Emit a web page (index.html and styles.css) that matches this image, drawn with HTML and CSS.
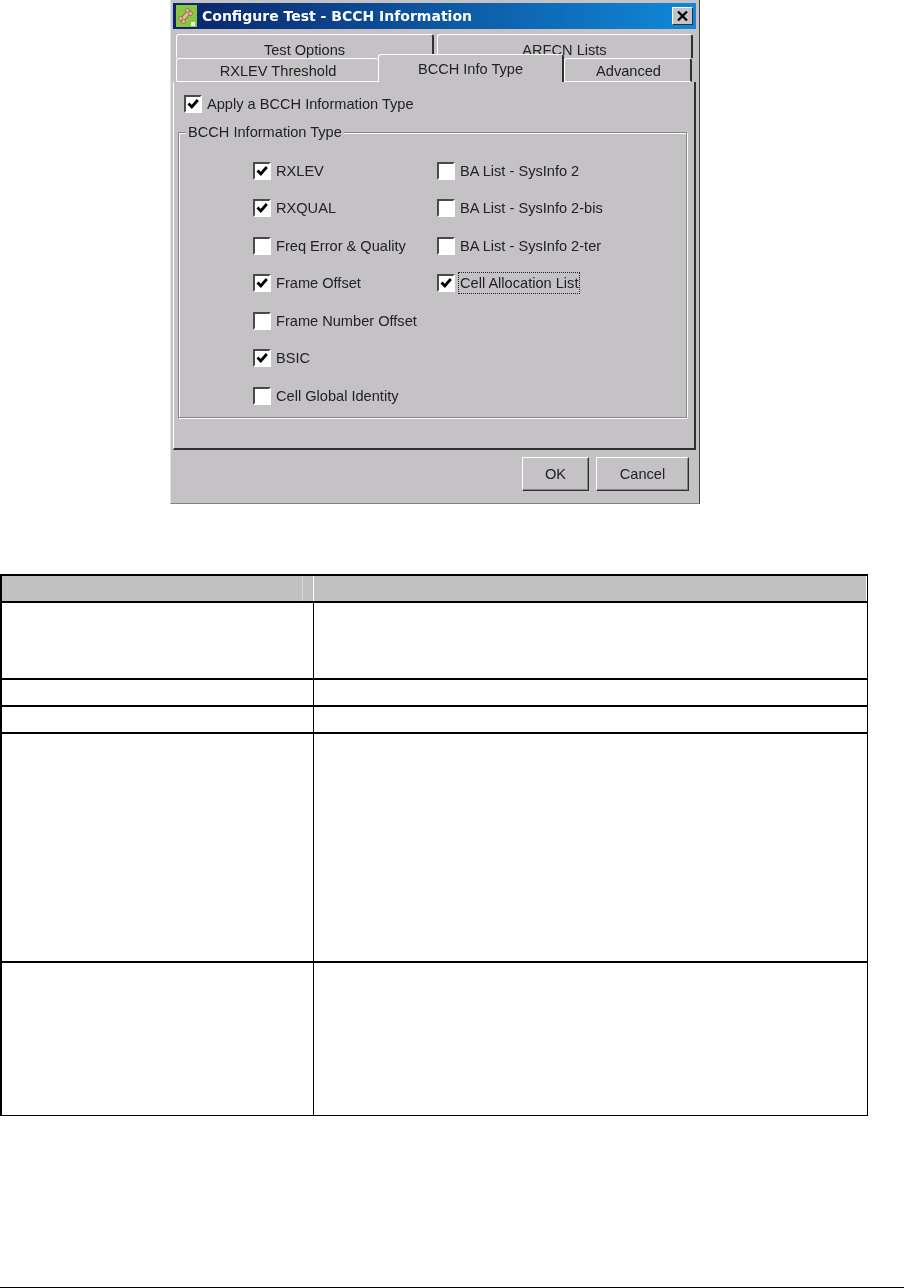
FILE: index.html
```html
<!DOCTYPE html>
<html lang="en">
<head>
    <meta charset="UTF-8">
    <meta name="viewport" content="width=device-width, initial-scale=1.0">
    <title>Configure Test - BCCH Information</title>
    <link rel="stylesheet" href="styles.css">
</head>
<body>

<div class="dialog">
    <div class="titlebar">
        <svg class="app-icon" width="21" height="22" viewBox="0 0 21 22">
            <rect width="21" height="22" fill="#8cc63f"/>
            <rect x="15" y="17" width="4" height="4" fill="#eef5d8"/>
            <path d="M6 15 L13 7" stroke="#8f7a5c" stroke-width="5" stroke-linecap="round"/>
            <path d="M6 15 L13 7" stroke="#e2bd92" stroke-width="3" stroke-linecap="round"/>
            <circle cx="4.500" cy="13.500" r="2" fill="#e2bd92" stroke="#8f7a5c"/>
            <circle cx="7.500" cy="16.500" r="2" fill="#e2bd92" stroke="#8f7a5c"/>
            <circle cx="11.500" cy="5.500" r="2" fill="#e2bd92" stroke="#8f7a5c"/>
            <circle cx="14.500" cy="8.500" r="2" fill="#e2bd92" stroke="#8f7a5c"/>
        </svg>
        <span class="title-text">Configure Test - BCCH Information</span>
        <div class="close-btn">
            <svg width="11" height="10" viewBox="0 0 11 10"><path d="M1 0.500 L10 9.500 M10 0.500 L1 9.500" stroke="#000" stroke-width="2.200"/></svg>
        </div>
    </div>

    <div class="tabs">
        <div class="tab-row tab-row-back">
            <div class="tab tab-options">Test Options</div>
            <div class="tab tab-arfcn">ARFCN Lists</div>
        </div>
        <div class="tab-row tab-row-front">
            <div class="tab tab-rxlev">RXLEV Threshold</div>
            <div class="tab tab-bcch">BCCH Info Type</div>
            <div class="tab tab-advanced">Advanced</div>
        </div>
    </div>

    <div class="panel">
        <div class="check apply-check">
            <span class="box"><svg viewBox="0 0 12 12"><path d="M1.500 5.500 L4.800 9 L10.800 2" fill="none" stroke="#000" stroke-width="2.800"/></svg></span>
            <span>Apply a BCCH Information Type</span>
        </div>

        <div class="group">
            <span class="group-label">BCCH Information Type</span>
            <div class="check-grid">
                <div class="check"><span class="box"><svg viewBox="0 0 12 12"><path d="M1.500 5.500 L4.800 9 L10.800 2" fill="none" stroke="#000" stroke-width="2.800"/></svg></span><span>RXLEV</span></div>
                <div class="check"><span class="box"></span><span>BA List - SysInfo 2</span></div>
                <div class="check"><span class="box"><svg viewBox="0 0 12 12"><path d="M1.500 5.500 L4.800 9 L10.800 2" fill="none" stroke="#000" stroke-width="2.800"/></svg></span><span>RXQUAL</span></div>
                <div class="check"><span class="box"></span><span>BA List - SysInfo 2-bis</span></div>
                <div class="check"><span class="box"></span><span>Freq Error &amp; Quality</span></div>
                <div class="check"><span class="box"></span><span>BA List - SysInfo 2-ter</span></div>
                <div class="check"><span class="box"><svg viewBox="0 0 12 12"><path d="M1.500 5.500 L4.800 9 L10.800 2" fill="none" stroke="#000" stroke-width="2.800"/></svg></span><span>Frame Offset</span></div>
                <div class="check"><span class="box"><svg viewBox="0 0 12 12"><path d="M1.500 5.500 L4.800 9 L10.800 2" fill="none" stroke="#000" stroke-width="2.800"/></svg></span><span class="focused">Cell Allocation List</span></div>
                <div class="check col-one"><span class="box"></span><span>Frame Number Offset</span></div>
                <div class="check col-one"><span class="box"><svg viewBox="0 0 12 12"><path d="M1.500 5.500 L4.800 9 L10.800 2" fill="none" stroke="#000" stroke-width="2.800"/></svg></span><span>BSIC</span></div>
                <div class="check col-one"><span class="box"></span><span>Cell Global Identity</span></div>
            </div>
        </div>
    </div>

    <div class="buttons">
        <div class="btn btn-ok">OK</div>
        <div class="btn btn-cancel">Cancel</div>
    </div>
</div>

<table class="info-table">
    <tr class="row-head"><th class="col-a"></th><th></th></tr>
    <tr class="row-a"><td></td><td></td></tr>
    <tr class="row-b"><td></td><td></td></tr>
    <tr class="row-b"><td></td><td></td></tr>
    <tr class="row-c"><td></td><td></td></tr>
    <tr class="row-d"><td></td><td></td></tr>
</table>

<div class="page-rule"></div>

</body>
</html>
```

FILE: styles.css
```css
html, body {
    margin: 0;
    padding: 0;
    background: #fff;
}

body {
    height: 1288px;
    overflow: hidden;
    font-family: "Liberation Sans", Arial, sans-serif;
}

/* Dialog */
.dialog {
    box-sizing: border-box;
    width: 530px;
    height: 504px;
    margin-left: 170px;
    padding: 3px 3px 0 2px;
    background: #c4c2c5;
    border-right: 1px solid #404040;
    border-bottom: 1px solid #808080;
    border-left: 1px solid #e4e4e4;
    color: #222;
    font-size: 14.6px;
    filter: blur(0.4px);
}

.titlebar {
    display: flex;
    align-items: center;
    height: 26px;
    padding: 0 3px 0 3px;
    background: linear-gradient(to right, #0a246a, #1088d8);
}

.app-icon {
    flex: none;
}

.title-text {
    margin-left: 5px;
    color: #fff;
    font-family: "DejaVu Sans", sans-serif;
    font-weight: bold;
    font-size: 14px;
}

.close-btn {
    display: flex;
    justify-content: center;
    align-items: center;
    box-sizing: border-box;
    width: 21px;
    height: 18px;
    margin-left: auto;
    background: #c4c2c5;
    border: 1px solid;
    border-color: #fff #303030 #303030 #fff;
}

/* Tabs */
.tabs {
    height: 53px;
    padding-left: 3px;
}

.tab-row {
    display: flex;
}

.tab-row-back {
    box-sizing: border-box;
    gap: 3px;
    padding-top: 5px;
    height: 25px;
}

.tab-row-front {
    position: relative;
    z-index: 1;
    align-items: flex-end;
    height: 28px;
}

.tab {
    box-sizing: border-box;
    flex: none;
    display: flex;
    justify-content: center;
    background: #c4c2c5;
    border-top: 1px solid #fff;
    border-left: 1px solid #fff;
    border-right: 2px solid #303030;
    border-radius: 3px 3px 0 0;
}

.tab-options, .tab-arfcn {
    height: 24px;
    padding-top: 7px;
    line-height: 16px;
}

.tab-options { width: 258px; }
.tab-arfcn { width: 256px; }

.tab-rxlev, .tab-advanced {
    height: 24px;
    padding-top: 4px;
    border-bottom: 1px solid #fff;
    line-height: 16px;
}

.tab-rxlev {
    width: 202px;
    border-right: 0;
    padding-left: 1px;
}

.tab-advanced {
    width: 128px;
    padding-left: 2px;
}

.tab-bcch {
    width: 186px;
    height: 28px;
    padding-top: 6px;
    line-height: 16px;
}

/* Panel */
.panel {
    box-sizing: border-box;
    width: 523px;
    height: 368px;
    padding: 14px 5px 0 4px;
    border-left: 1px solid #fff;
    border-right: 2px solid #303030;
    border-bottom: 2px solid #303030;
}

.check {
    display: flex;
    align-items: center;
    gap: 5px;
    height: 16px;
}

.box {
    box-sizing: border-box;
    flex: none;
    display: flex;
    width: 18px;
    height: 18px;
    padding: 1px;
    background: #fff;
    border: 2px solid;
    border-color: #4a4a4a #fff #fff #4a4a4a;
}

.box svg {
    width: 100%;
    height: 100%;
}

.apply-check {
    margin-left: 6px;
}

.group {
    position: relative;
    box-sizing: border-box;
    width: 509px;
    height: 286px;
    margin-top: 20px;
    padding: 19px 0 0 74px;
    border: 1px solid #858585;
    box-shadow: inset 1px 1px 0 #fff, 1px 1px 0 #fff;
}

.group-label {
    position: absolute;
    top: -9px;
    left: 7px;
    padding: 0 2px;
    background: #c4c2c5;
    line-height: 16px;
}

.check-grid {
    display: grid;
    grid-template-columns: 184px 1fr;
    grid-auto-rows: 37.5px;
    align-items: center;
}

.col-one {
    grid-column: 1;
}

.focused {
    outline: 1px dotted #222;
    padding: 2px 1px;
    margin-left: -1px;
}

/* Buttons */
.buttons {
    display: flex;
    gap: 7px;
    justify-content: flex-end;
    padding: 7px 7px 0 0;
}

.btn {
    box-sizing: border-box;
    display: flex;
    justify-content: center;
    align-items: center;
    height: 34px;
    border: 1px solid;
    border-color: #fff #303030 #303030 #fff;
    box-shadow: inset -1px -1px 0 #858585;
}

.btn-ok { width: 67px; }
.btn-cancel { width: 93px; }

/* Table below the dialog */
.info-table {
    table-layout: fixed;
    width: 868px;
    margin-top: 70px;
    border-collapse: separate;
    border-spacing: 0;
    border-top: 2px solid #000;
    border-left: 2px solid #000;
    border-right: 1px solid #000;
    border-bottom: 1px solid #000;
}

.info-table th, .info-table td {
    padding: 0;
    border-top: 2px solid #000;
}

.info-table th {
    background: #c0c0c0;
    border-top: 0;
    box-shadow: inset -1px 0 0 #fff;
}

.info-table td:first-child {
    border-right: 1px solid #000;
}

/* the pale rules inside the header cell come from the source document */
.info-table th.col-a {
    width: 312px;
    background: linear-gradient(to right, #c0c0c0 300px, #d8d8d8 300px, #d8d8d8 301px, #c0c0c0 301px);
}

.row-head { height: 25px; }
.row-a { height: 77px; }
.row-b { height: 27px; }
.row-c { height: 229px; }
.row-d { height: 154px; }

.page-rule {
    height: 1px;
    margin-top: 171px;
    background: #000;
}
```
